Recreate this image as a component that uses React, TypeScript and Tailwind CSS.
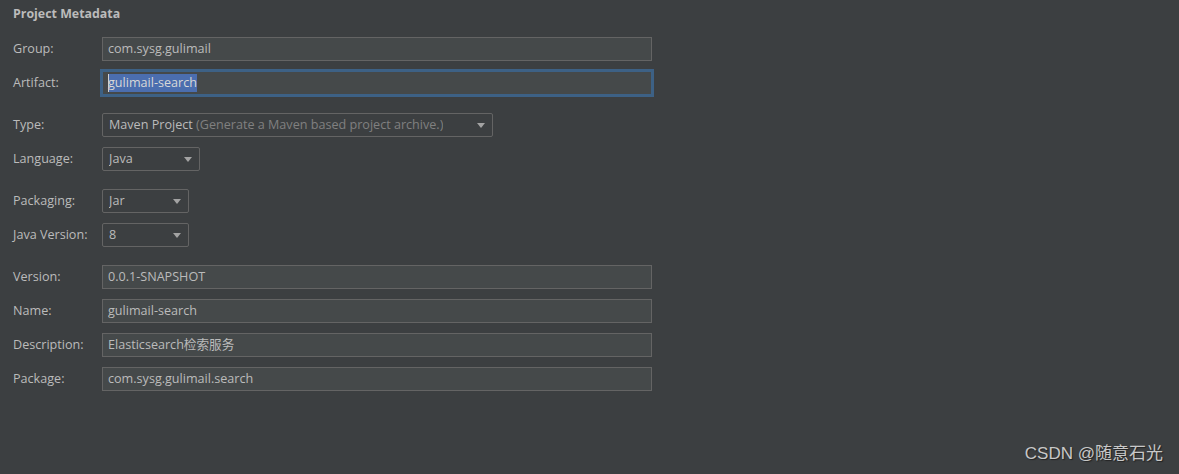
import React from 'react';

const font = { fontFamily: '"Open Sans", "Noto Sans CJK SC", sans-serif' };

function Label({ children }: { children: React.ReactNode }) {
    return <div className="w-[89px] shrink-0 text-[12.6px] text-[#bbbbbb]">{children}</div>;
}

function TextField({ value }: { value: string }) {
    return (
        <div className="w-[550px] h-6 border border-[#646464] bg-[#45494a] px-[5px] flex items-center text-[12.6px] text-[#bbbbbb]">
            {value}
        </div>
    );
}

function Arrow() {
    return (
        <svg width="8" height="5" viewBox="0 0 8 5" className="shrink-0">
            <path d="M0 0 L8 0 L4 5 Z" fill="#a3a3a3" />
        </svg>
    );
}

function Select({ width, children }: { width: string; children: React.ReactNode }) {
    return (
        <div className={`${width} h-6 border border-[#646464] rounded-[2px] bg-[#3c3f41] pl-[6px] pr-[7px] flex items-center justify-between text-[12.6px] text-[#bbbbbb]`}>
            <span className="truncate">{children}</span>
            <Arrow />
        </div>
    );
}

function Row({ label, children }: { label: string; children: React.ReactNode }) {
    return (
        <div className="flex items-center">
            <Label>{label}</Label>
            {children}
        </div>
    );
}

export default function App() {
    return (
        <div className="relative w-[1179px] h-[474px] bg-[#3c3f41] overflow-hidden" style={font}>
            <div className="pt-[5px] pl-[13px]">
                <h2 className="h-[17px] leading-[17px] text-[12.4px] font-bold text-[#bbbbbb]">Project Metadata</h2>

                <div className="mt-[15px] flex flex-col gap-[18px]">
                    <div className="flex flex-col gap-[10px]">
                        <Row label="Group:">
                            <TextField value="com.sysg.gulimail" />
                        </Row>
                        <Row label="Artifact:">
                            <div className="w-[550px] h-6 border border-[#3d6185] ring-2 ring-[#3d6185] bg-[#45494a] px-[5px] flex items-center text-[12.6px] text-[#bbbbbb]">
                                <span className="relative bg-[#4b6eaf] leading-[18px] text-[#d8d8d8]">
                                    <span className="absolute left-0 top-0 w-px h-[18px] bg-[#d0d0d0]" />
                                    gulimail-search
                                </span>
                            </div>
                        </Row>
                    </div>

                    <div className="flex flex-col gap-[10px]">
                        <Row label="Type:">
                            <Select width="w-[391px]">
                                Maven Project <span className="text-[#808080]">(Generate a Maven based project archive.)</span>
                            </Select>
                        </Row>
                        <Row label="Language:">
                            <Select width="w-[98px]">Java</Select>
                        </Row>
                    </div>

                    <div className="flex flex-col gap-[10px]">
                        <Row label="Packaging:">
                            <Select width="w-[87px]">Jar</Select>
                        </Row>
                        <Row label="Java Version:">
                            <Select width="w-[87px]">8</Select>
                        </Row>
                    </div>

                    <div className="flex flex-col gap-[10px]">
                        <Row label="Version:">
                            <TextField value="0.0.1-SNAPSHOT" />
                        </Row>
                        <Row label="Name:">
                            <TextField value="gulimail-search" />
                        </Row>
                        <Row label="Description:">
                            <TextField value="Elasticsearch检索服务" />
                        </Row>
                        <Row label="Package:">
                            <TextField value="com.sysg.gulimail.search" />
                        </Row>
                    </div>
                </div>
            </div>

            <div className="absolute right-[16px] bottom-[8px] text-[17px] text-[#c8c8c8] [text-shadow:1px_1px_1px_#222]" style={{ fontFamily: '"Liberation Sans", "Noto Sans CJK SC", sans-serif' }}>
                CSDN @随意石光
            </div>
        </div>
    );
}
